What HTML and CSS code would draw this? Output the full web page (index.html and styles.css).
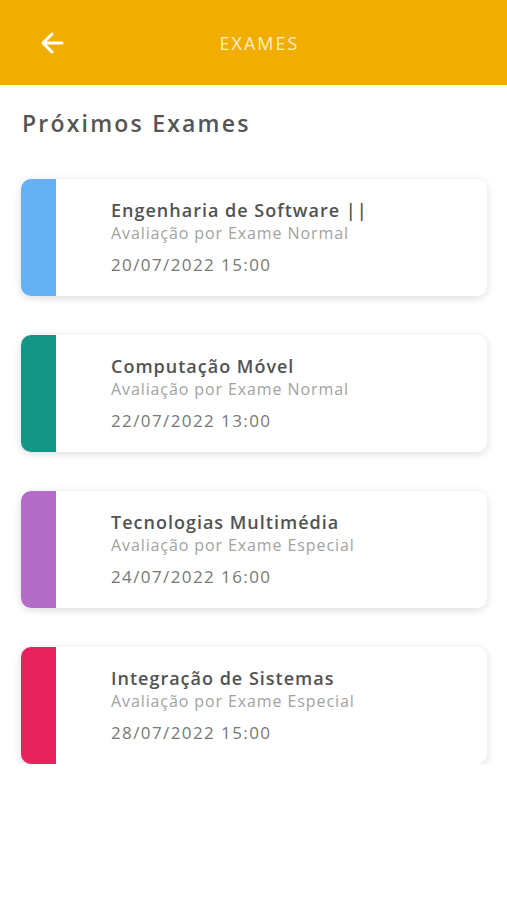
FILE: index.html
```html
<!DOCTYPE html>
<html lang="pt">
<head>
  <meta charset="UTF-8">
  <title>Exames</title>
  <link rel="stylesheet" href="styles.css">
</head>
<body>

  <header class="topbar">
    <button class="back-btn" aria-label="Voltar">
      <svg width="24" height="22" viewBox="0 0 24 22"><path d="M22 11H3M12 2L3 11l9 9" fill="none" stroke="#fff" stroke-width="3" stroke-linecap="round" stroke-linejoin="round"/></svg>
    </button>
    <h1>EXAMES</h1>
  </header>

  <main class="content">
    <h2>Próximos Exames</h2>

    <div class="exam-list">
      <div class="exam-card">
        <div class="exam-color blue"></div>
        <div class="exam-info">
          <div class="exam-title">Engenharia de Software ||</div>
          <div class="exam-type">Avaliação por Exame Normal</div>
          <div class="exam-date">20/07/2022 15:00</div>
        </div>
      </div>

      <div class="exam-card">
        <div class="exam-color teal"></div>
        <div class="exam-info">
          <div class="exam-title">Computação Móvel</div>
          <div class="exam-type">Avaliação por Exame Normal</div>
          <div class="exam-date">22/07/2022 13:00</div>
        </div>
      </div>

      <div class="exam-card">
        <div class="exam-color purple"></div>
        <div class="exam-info">
          <div class="exam-title">Tecnologias Multimédia</div>
          <div class="exam-type">Avaliação por Exame Especial</div>
          <div class="exam-date">24/07/2022 16:00</div>
        </div>
      </div>

      <div class="exam-card">
        <div class="exam-color pink"></div>
        <div class="exam-info">
          <div class="exam-title">Integração de Sistemas</div>
          <div class="exam-type">Avaliação por Exame Especial</div>
          <div class="exam-date">28/07/2022 15:00</div>
        </div>
      </div>
    </div>
  </main>

</body>
</html>
```

FILE: styles.css
```css
body {
  margin: 0;
  font-family: 'Open Sans', 'Noto Sans', sans-serif;
  background: #ffffff;
}

.topbar {
  height: 85px;
  background: #f2ae00;
  display: flex;
  align-items: center;
  position: relative;
}

.back-btn {
  background: none;
  border: none;
  padding: 0;
  margin-left: 40px;
  display: flex;
  cursor: pointer;
}

.topbar h1 {
  position: absolute;
  left: 0;
  right: 0;
  text-align: center;
  margin: 0;
  font-size: 18px;
  font-weight: 400;
  color: #fdeccb;
  letter-spacing: 2px;
  pointer-events: none;
  transform: translateX(6px);
}

.content {
  padding: 0 20px 0 21px;
}

.content h2 {
  margin: 22px 0 0 1px;
  font-size: 23px;
  font-weight: 600;
  color: #555555;
  letter-spacing: 2.2px;
}

.exam-list {
  display: flex;
  flex-direction: column;
  gap: 39px;
  margin-top: 40px;
}

.exam-card {
  display: flex;
  height: 117px;
  background: #ffffff;
  border-radius: 10px;
  box-shadow: 0 2px 8px rgba(0, 0, 0, 0.14);
  overflow: hidden;
}

.exam-color {
  width: 35px;
  flex-shrink: 0;
}

.blue { background: #64b0f2; }
.teal { background: #149585; }
.purple { background: #b36cc8; }
.pink { background: #e8215f; }

.exam-info {
  padding: 19px 0 0 55px;
}

.exam-title {
  font-size: 18px;
  font-weight: 600;
  color: #525252;
  letter-spacing: 1px;
}

.exam-type {
  font-size: 16px;
  color: #a2a2a2;
  margin-top: 0;
  letter-spacing: 0.9px;
}

.exam-date {
  font-size: 17px;
  color: #777777;
  margin-top: 9px;
  letter-spacing: 1.4px;
}
```
